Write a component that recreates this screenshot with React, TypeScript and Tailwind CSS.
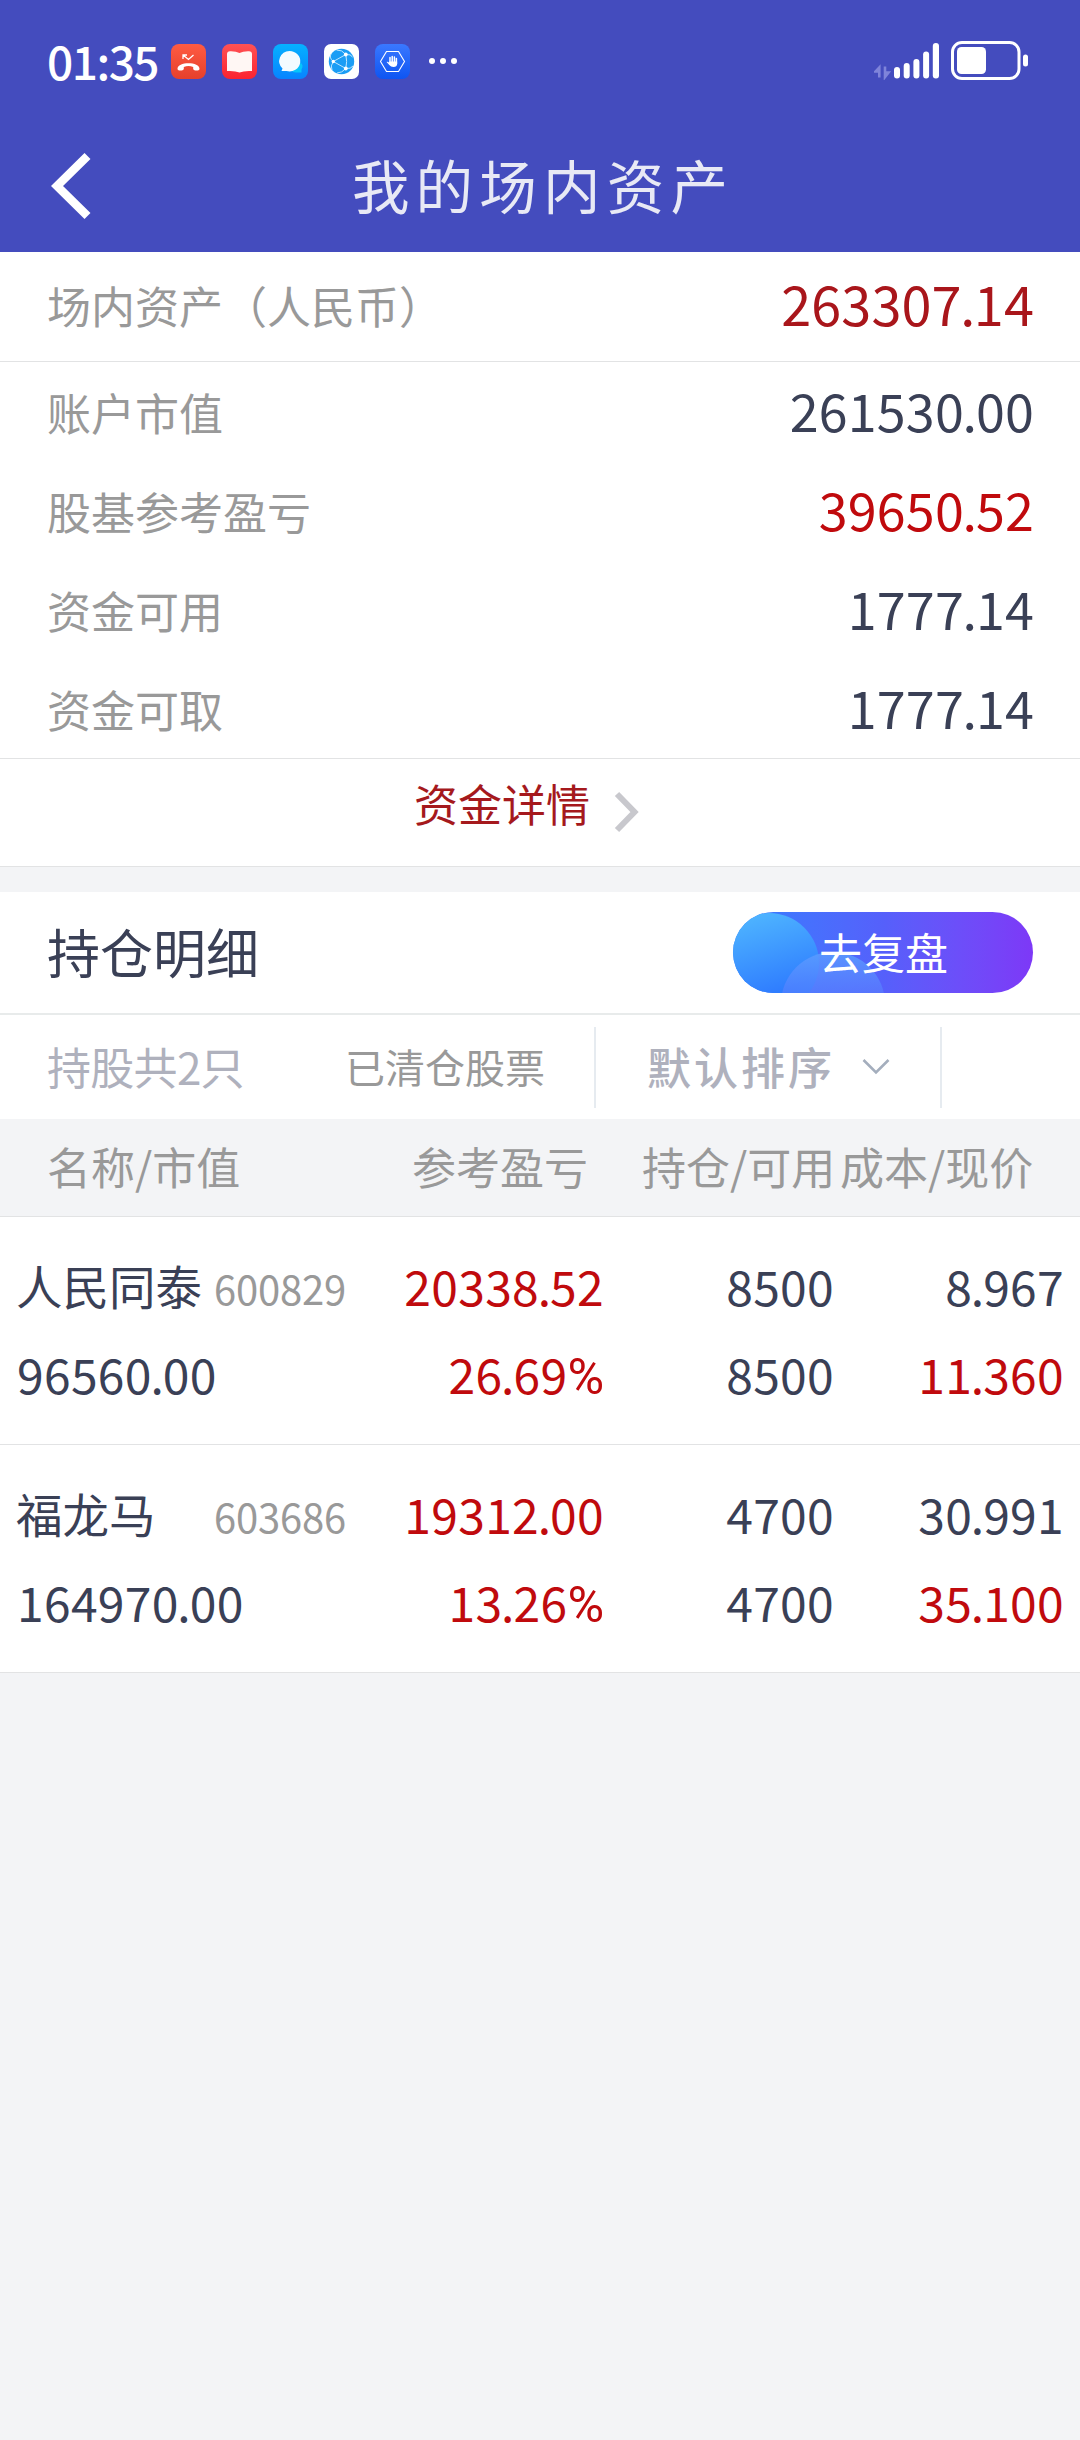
import type { ReactNode } from "react";

const ink = "text-[#3a4056]";
const red = "text-[#c00a0d]";

function StatusBar() {
  return (
    <div className="flex h-[122px] items-center justify-between pl-[47px] pr-[52px]">
      <div className="flex items-center">
        <span className="mt-[-3px] w-[124px] text-[46px] font-medium leading-[46px] tracking-[-1.500px] text-white">01:35</span>
        <div className="flex gap-4">
          <svg width="35" height="35" viewBox="0 0 35 35">
            <defs>
              <linearGradient id="call" x1="0" y1="0" x2="0" y2="1">
                <stop offset="0" stopColor="#ff5b42" />
                <stop offset="1" stopColor="#e5402c" />
              </linearGradient>
            </defs>
            <rect width="35" height="35" rx="8" fill="url(#call)" />
            <path d="M12 15V11H16M12.3 11.3L17.5 15.5L22.500 11" fill="none" stroke="#fff" strokeWidth="1.3" />
            <path d="M6.500 25C6 17.200 29 17.200 28.500 25C28.200 27.300 22.800 27 22.200 25V23C19 21.500 16 21.500 12.800 23V25C12.200 27 6.800 27.300 6.500 25Z" fill="#fff" />
          </svg>
          <svg width="35" height="35" viewBox="0 0 35 35">
            <defs>
              <linearGradient id="book" x1="0" y1="0" x2="0" y2="1">
                <stop offset="0" stopColor="#ff5254" />
                <stop offset="1" stopColor="#fb2330" />
              </linearGradient>
            </defs>
            <rect width="35" height="35" rx="8" fill="url(#book)" />
            <path d="M5 10Q5 7.500 8 7.200Q14 7 17.500 9Q21 7 27 7.200Q30 7.500 30 10V27Q22 26.500 17.500 28.500Q13 26.500 5 27Z" fill="#fff7f4" />
          </svg>
          <svg width="35" height="35" viewBox="0 0 35 35">
            <defs>
              <linearGradient id="chat" x1="0" y1="0" x2="0" y2="1">
                <stop offset="0" stopColor="#06b1ff" />
                <stop offset="1" stopColor="#0784ff" />
              </linearGradient>
            </defs>
            <rect width="35" height="35" rx="8" fill="url(#chat)" />
            <path d="M18 26Q27 25 27.500 18.500Q31 21 28.500 25.500V28.500H24Q20 29 18 26Z" fill="#07c4fb" />
            <path d="M16.500 7A10.800 10.200 0 1 1 13.500 27H8.500L9.500 24.500A10.800 10.200 0 0 1 16.500 7Z" fill="#f3fbff" />
          </svg>
          <svg width="35" height="35" viewBox="0 0 35 35">
            <rect width="35" height="35" rx="7" fill="#fff" />
            <circle cx="17.500" cy="17.500" r="12.700" fill="#1b9df5" />
            <g fill="none" stroke="#bfe6ff" strokeWidth="1">
              <path d="M9.300 17.500L21.800 10.500Q23.500 17.500 21.800 24.500Z" />
              <path d="M9.300 17.500Q5 14 7 10M9.300 17.500Q6 22 8 26M21.800 10.500Q18 5.500 12.500 6M21.800 10.500Q27 10 28.500 13M21.800 24.500Q18 29 13 29M21.800 24.500Q27 25 29 22" />
            </g>
            <g fill="#fff">
              <circle cx="9.300" cy="17.500" r="1.700" />
              <circle cx="21.800" cy="10.500" r="1.900" />
              <circle cx="21.800" cy="24.500" r="1.900" />
            </g>
          </svg>
          <svg width="35" height="35" viewBox="0 0 35 35">
            <defs>
              <linearGradient id="hand" x1="0" y1="0" x2="0" y2="1">
                <stop offset="0" stopColor="#3a78ff" />
                <stop offset="1" stopColor="#0e55f2" />
              </linearGradient>
            </defs>
            <rect width="35" height="35" rx="8" fill="url(#hand)" />
            <path d="M11.500 7.500H23.500L29.500 17.500L23.500 27.500H11.500L5.500 17.500Z" fill="none" stroke="#fff" strokeWidth="1.100" />
            <path d="M15 13.500V19M17.200 12.500V18M19.400 13V18M21.400 14.500V20" stroke="#fff" strokeWidth="1.500" strokeLinecap="round" />
            <path d="M14.300 17.500H22.150V20Q22 23 18.500 23Q15.800 23 14.300 21L11.600 18Q12.300 17 14.300 18.800Z" fill="#fff" />
          </svg>
        </div>
        <div className="ml-[19px] flex gap-[5px]">
          <span className="size-[6px] rounded-full bg-white" />
          <span className="size-[6px] rounded-full bg-white" />
          <span className="size-[6px] rounded-full bg-white" />
        </div>
      </div>
      <svg className="mt-[-2px]" width="154" height="40" viewBox="0 0 154 40">
        <path d="M5.300 37.500V27.500L1.500 31.500H5M11 26.500V37L14.500 32.500H11" fill="none" stroke="#7f84da" strokeWidth="2.600" />
        <g fill="#fff">
          <rect x="20" y="27" width="6" height="11.500" rx="3" />
          <rect x="29.700" y="23" width="6" height="15.500" rx="3" />
          <rect x="39.400" y="19" width="6" height="19.500" rx="3" />
          <rect x="49.100" y="11.500" width="6" height="27" rx="3" />
          <rect x="58.800" y="3" width="6.200" height="35.500" rx="3" />
          <rect x="83" y="7" width="29" height="27" rx="4.500" />
          <rect x="149" y="14.500" width="5" height="12" rx="2.500" />
        </g>
        <rect x="78.500" y="2.500" width="66.500" height="36" rx="9.500" fill="none" stroke="#fff" strokeWidth="3" />
      </svg>
    </div>
  );
}

function TitleBar() {
  return (
    <div className="grid h-[130px] grid-cols-[200px_1fr_200px] items-center">
      <svg className="ml-[51px] mt-[-3px]" width="42" height="68" viewBox="0 0 42 68">
        <path d="M36.500 4L6 34L36.500 64" fill="none" stroke="#fff" strokeWidth="8.500" />
      </svg>
      <h1 className="mt-[-6px] whitespace-nowrap pl-[6px] text-center text-[57.500px] font-normal leading-[64px] tracking-[6.200px] text-[#e8e9f5]">
        我的场内资产
      </h1>
    </div>
  );
}

function Amount({ value, className }: { value: string; className: string }) {
  const percent = value.endsWith("%");
  const [whole, fraction] = value.replace("%", "").split(".");
  if (fraction === undefined) return <span className={className}>{value}</span>;
  return (
    <span className={className}>
      {whole}
      <span className="mx-[-0.027em]">.</span>
      {fraction}
      {percent && <span className="font-[Roboto] text-[50px] leading-[40px] tracking-normal">%</span>}
    </span>
  );
}

function SummaryRow({ label, value, tone }: { label: string; value: string; tone: string }) {
  return (
    <div className="flex h-[99px] items-center justify-between pl-[47px] pr-[46px]">
      <span className="pt-px text-[44px] leading-[60px] text-[#999]">{label}</span>
      <Amount value={value} className={`mt-[-4px] text-[52px] leading-[60px] tracking-[0.200px] ${tone}`} />
    </div>
  );
}

type Holding = {
  name: string;
  code: string;
  marketValue: string;
  profit: string;
  rate: string;
  held: string;
  usable: string;
  cost: string;
  price: string;
};

const holdings: Holding[] = [
  { name: "人民同泰", code: "600829", marketValue: "96560.00", profit: "20338.52", rate: "26.69%", held: "8500", usable: "8500", cost: "8.967", price: "11.360" },
  { name: "福龙马", code: "603686", marketValue: "164970.00", profit: "19312.00", rate: "13.26%", held: "4700", usable: "4700", cost: "30.991", price: "35.100" },
];

function Stack({ children, className = "" }: { children: ReactNode; className?: string }) {
  return <div className={`flex flex-col gap-[28px] ${className}`}>{children}</div>;
}

const figure = "h-[60px] text-[48px] leading-[60px] tracking-[0.300px]";

function HoldingRow({ item }: { item: Holding }) {
  return (
    <div className="grid h-[228px] grid-cols-[347px_240px_230px_230px] border-b border-[#e2e3e4] pl-[17px] pt-[38px]">
      <Stack>
        <div className="flex h-[60px] items-center">
          <span className={`ml-[-1px] w-[198px] text-[46.500px] leading-[60px] ${ink}`}>{item.name}</span>
          <span className="pt-[6px] text-[40px] leading-[60px] tracking-[-0.200px] text-[#999]">{item.code}</span>
        </div>
        <Amount value={item.marketValue} className={`${figure} ${ink}`} />
      </Stack>
      <Stack className="items-end">
        <Amount value={item.profit} className={`${figure} ${red}`} />
        <Amount value={item.rate} className={`${figure} ${red}`} />
      </Stack>
      <Stack className="items-end">
        <Amount value={item.held} className={`${figure} ${ink}`} />
        <Amount value={item.usable} className={`${figure} ${ink}`} />
      </Stack>
      <Stack className="items-end">
        <Amount value={item.cost} className={`${figure} ${ink}`} />
        <Amount value={item.price} className={`${figure} ${red}`} />
      </Stack>
    </div>
  );
}

export default function App() {
  return (
    <div className="flex h-[2440px] w-[1080px] flex-col overflow-hidden bg-[#f3f4f6] font-['Noto_Sans_CJK_SC',sans-serif]">
      <header className="h-[252px] bg-[#444cbe]">
        <StatusBar />
        <TitleBar />
      </header>

      <section className="border-b border-[#e2e3e4] bg-white">
        <div className="flex h-[110px] items-center justify-between border-b border-[#e2e3e4] pl-[47px] pr-[46px]">
          <span className="mt-[-3px] text-[44px] leading-[60px] text-[#999]">场内资产（人民币）</span>
          <Amount value="263307.14" className="mt-[-8px] text-[54px] leading-[60px] tracking-[0.100px] text-[#a9161b]" />
        </div>
        <div className="border-b border-[#e2e3e4]">
          <SummaryRow label="账户市值" value="261530.00" tone={ink} />
          <SummaryRow label="股基参考盈亏" value="39650.52" tone={red} />
          <SummaryRow label="资金可用" value="1777.14" tone={ink} />
          <SummaryRow label="资金可取" value="1777.14" tone={ink} />
        </div>
        <a className="flex h-[107px] items-start pl-[414px] pt-[14px]">
          <span className="text-[44px] leading-[60px] text-[#a5191d]">资金详情</span>
          <svg className="ml-[23px] mt-[18px]" width="28" height="42" viewBox="0 0 28 42">
            <path d="M4 3L21.500 21L4 39" fill="none" stroke="#c8c8cd" strokeWidth="6" />
          </svg>
        </a>
      </section>

      <section className="mt-[25px] bg-white">
        <div className="flex h-[123px] items-center justify-between border-b-2 border-[#e8ebeb] pl-[47px] pr-[47px]">
          <h2 className={`mt-[-4px] text-[53px] font-normal leading-[60px] ${ink}`}>持仓明细</h2>
          <button className="relative mt-[-1px] h-[81px] w-[300px] overflow-hidden rounded-full bg-linear-to-r from-[#2f80ff] via-[#5560fb] to-[#7d38f7]">
            <svg className="absolute inset-0" width="300" height="81" viewBox="0 0 300 81">
              <defs>
                <linearGradient id="bubble" x1="0.300" y1="0" x2="0.600" y2="1">
                  <stop offset="0" stopColor="#4fb6ff" />
                  <stop offset="0.800" stopColor="#2f7dff" />
                </linearGradient>
                <linearGradient id="bubbleSmall" x1="0" y1="0" x2="0" y2="1">
                  <stop offset="0" stopColor="#5b9dff" stopOpacity="0.850" />
                  <stop offset="0.450" stopColor="#5a7dff" stopOpacity="0.550" />
                </linearGradient>
              </defs>
              <circle cx="36" cy="51" r="50" fill="url(#bubble)" />
              <circle cx="100" cy="92" r="52" fill="url(#bubbleSmall)" />
            </svg>
            <span className="relative mt-[-3px] block pl-[1px] text-[43px] leading-[80px] text-white">去复盘</span>
          </button>
        </div>
        <div className="flex h-[104px] items-center pl-[47px]">
          <span className="mt-[-2px] w-[298px] text-[44px] leading-[60px] tracking-[-0.700px] text-[#afb1bd]">持股共2只</span>
          <span className="mt-[-2px] w-[249px] text-[40px] leading-[60px] text-[#999]">已清仓股票</span>
          <div className="flex h-[81px] w-[348px] items-center border-x-2 border-[#e6ebf0] pl-[51px]">
            <span className="mt-[-2px] text-[44px] font-medium leading-[60px] tracking-[3px] text-[#afb1bd]">默认排序</span>
            <svg className="ml-[27px]" width="28" height="18" viewBox="0 0 28 18">
              <path d="M1.500 2L14 14.500L26.500 2" fill="none" stroke="#a4aebd" strokeWidth="2.600" />
            </svg>
          </div>
        </div>
      </section>

      <section>
        <div className="flex h-[98px] items-center border-b border-[#e2e3e4] pb-[3px] pl-[47px] text-[44px] leading-[60px] text-[#999]">
          <span className="w-[365px]">名称/市值</span>
          <span className="w-[230px]">参考盈亏</span>
          <span className="w-[198px]">持仓/可用</span>
          <span>成本/现价</span>
        </div>
        <div className="bg-white">
          {holdings.map((item) => (
            <HoldingRow key={item.code} item={item} />
          ))}
        </div>
      </section>
    </div>
  );
}
